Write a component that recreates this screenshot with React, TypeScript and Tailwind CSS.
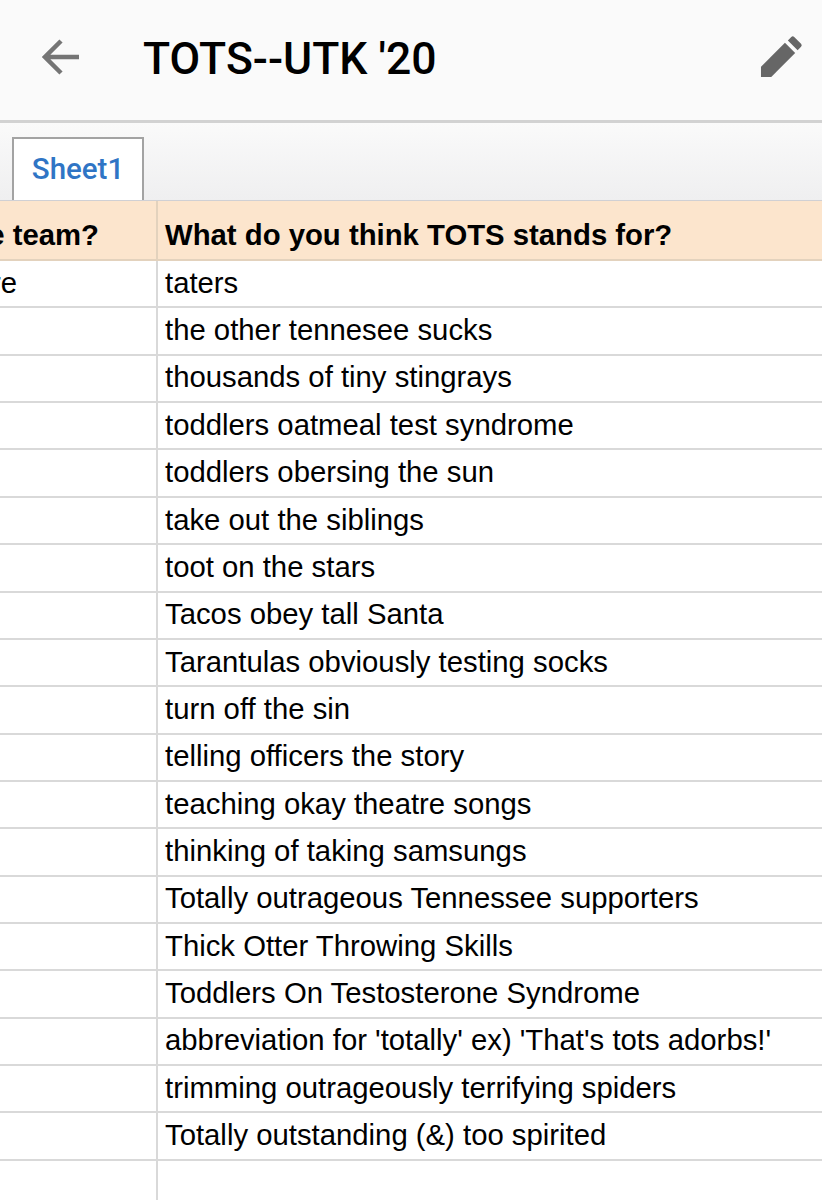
const rows = [
  "taters",
  "the other tennesee sucks",
  "thousands of tiny stingrays",
  "toddlers oatmeal test syndrome",
  "toddlers obersing the sun",
  "take out the siblings",
  "toot on the stars",
  "Tacos obey tall Santa",
  "Tarantulas obviously testing socks",
  "turn off the sin",
  "telling officers the story",
  "teaching okay theatre songs",
  "thinking of taking samsungs",
  "Totally outrageous Tennessee supporters",
  "Thick Otter Throwing Skills",
  "Toddlers On Testosterone Syndrome",
  "abbreviation for 'totally' ex) 'That's tots adorbs!'",
  "trimming outrageously terrifying spiders",
  "Totally outstanding (&) too spirited",
];

export default function App() {
  return (
    <div className="h-[1200px] w-[822px] overflow-hidden bg-white font-['Liberation_Sans',Arial,sans-serif] text-black">
      <header className="flex h-[123px] items-center border-b-[3px] border-[#d2d2d2] bg-[#fafafa] pb-[6px]">
        <svg className="ml-[42px] h-[38px] w-[38px]" viewBox="0 0 38 38" fill="none" stroke="#757575" strokeWidth="4.500">
          <path d="M37 19H3M19 3 3 19l16 16" />
        </svg>
        <h1 className="ml-[63px] pt-[4px] font-['Roboto',sans-serif] text-[44.500px] font-medium leading-none">TOTS--UTK '20</h1>
        <svg className="mb-[2px] ml-auto mr-[19px] h-[43px] w-[43px]" viewBox="0 0 44 44" fill="#666666">
          <path d="M1 43V32.500L25.500 8l10.500 10.500L11.500 43z" />
          <path d="M28.500 5.500 32 2q1.500-1.500 3 0l7 7q1.500 1.500 0 3l-3.500 3.500z" />
        </svg>
      </header>

      <div className="flex h-[78px] items-end border-b border-[#d0d0d4] bg-gradient-to-b from-[#fafafa] to-[#efeff0] pl-[12px]">
        <div className="flex h-[63px] w-[132px] items-center justify-center border-x-2 border-t-2 border-[#a3a3a3] bg-white pb-[1px] font-['Roboto',sans-serif] text-[29.500px] font-medium text-[#2f75c5]">
          Sheet1
        </div>
      </div>

      <div className="flex h-[60px] border-b-2 border-[#e3d2bd] bg-[#fce5cd] text-[29.300px] font-bold">
        <div className="flex w-[158px] shrink-0 items-center justify-end overflow-hidden whitespace-nowrap border-r-2 border-[#e3d2bd] pr-[57px] pt-[9px]">
          on the team?
        </div>
        <div className="flex items-center whitespace-nowrap pl-[7px] pt-[9px]">What do you think TOTS stands for?</div>
      </div>

      {rows.map((row, i) => (
        <div key={row} className="flex h-[47.370px] border-b-2 border-[#d9d9d9] text-[29.300px]">
          <div className="flex w-[158px] shrink-0 items-center justify-end overflow-hidden whitespace-nowrap border-r-2 border-[#d9d9d9] pb-[2px] pr-[139px]">
            {i === 0 ? "Sure" : ""}
          </div>
          <div className="flex items-center whitespace-nowrap pb-[2px] pl-[7px]">{row}</div>
        </div>
      ))}

      <div className="h-[40px] w-[158px] border-r-2 border-[#d9d9d9]" />
    </div>
  );
}
